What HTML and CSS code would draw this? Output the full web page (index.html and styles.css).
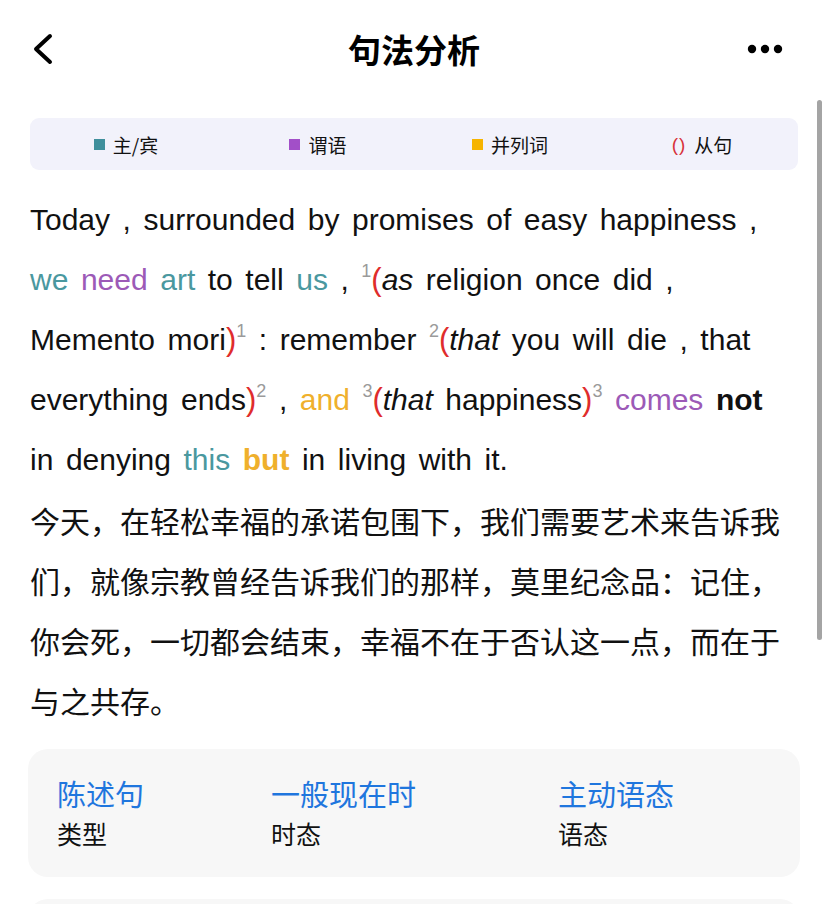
FILE: index.html
```html
<!DOCTYPE html>
<html lang="zh-CN">
<head>
<meta charset="utf-8">
<title>句法分析</title>
<link rel="stylesheet" href="styles.css">
</head>
<body>
<div class="page">
  <header class="nav">
    <svg class="back" width="24" height="32" viewBox="0 0 24 32"><path d="M18 3 L4 16 L18 29" fill="none" stroke="#000" stroke-width="4" stroke-linecap="round" stroke-linejoin="round"/></svg>
    <h1 class="title">句法分析</h1>
    <svg class="more" width="40" height="12" viewBox="0 0 40 12"><circle cx="6" cy="6" r="4.2" fill="#000"/><circle cx="19" cy="6" r="4.2" fill="#000"/><circle cx="32" cy="6" r="4.2" fill="#000"/></svg>
  </header>

  <div class="legend">
    <div class="legend-item"><span class="sq sq-teal"></span>主/宾</div>
    <div class="legend-item"><span class="sq sq-purple"></span>谓语</div>
    <div class="legend-item"><span class="sq sq-orange"></span>并列词</div>
    <div class="legend-item"><span class="paren-mark">()</span>从句</div>
  </div>

  <p class="en">Today , surrounded by promises of easy happiness , <span class="subj">we</span> <span class="pred">need</span> <span class="subj">art</span> to tell <span class="subj">us</span> , <sup class="num">1</sup><span class="par">(</span><i>as</i> religion once did , Memento mori<span class="par">)</span><sup class="num">1</sup> : remember <sup class="num">2</sup><span class="par">(</span><i>that</i> you will die , that everything ends<span class="par">)</span><sup class="num">2</sup> , <span class="conj">and</span> <sup class="num">3</sup><span class="par">(</span><i>that</i> happiness<span class="par">)</span><sup class="num">3</sup> <span class="pred">comes</span> <b>not</b> in denying <span class="subj">this</span> <b class="conj">but</b> in living with it.</p>
  <p class="zh">今天，在轻松幸福的承诺包围下，我们需要艺术来告诉我们，就像宗教曾经告诉我们的那样，莫里纪念品：记住，你会死，一切都会结束，幸福不在于否认这一点，而在于与之共存。</p>

  <div class="card info">
    <div class="info-col"><div class="val">陈述句</div><div class="lab">类型</div></div>
    <div class="info-col"><div class="val">一般现在时</div><div class="lab">时态</div></div>
    <div class="info-col"><div class="val">主动语态</div><div class="lab">语态</div></div>
  </div>
  <div class="card next"></div>

  <div class="scrollbar"></div>
</div>
</body>
</html>
```
FILE: styles.css
```css
html, body {
  margin: 0;
  padding: 0;
  background: #fff;
}
body {
  font-family: "Liberation Sans", "Noto Sans CJK SC", sans-serif;
  color: #000;
  overflow: hidden;
}
.page {
  position: relative;
  width: 828px;
  height: 904px;
  overflow: hidden;
}
.nav {
  height: 100px;
  display: flex;
  align-items: center;
  justify-content: space-between;
  padding: 0 30px 0 32px;
  box-sizing: border-box;
  position: relative;
}
.back {
  display: block;
  margin-top: -2px;
}
.more {
  display: block;
  margin-top: -2px;
  margin-right: 12px;
}
.title {
  position: absolute;
  left: 0;
  right: 0;
  top: 0;
  margin: 0;
  line-height: 98px;
  text-align: center;
  font-family: "Noto Sans CJK SC", sans-serif;
  font-weight: 700;
  font-size: 33px;
  pointer-events: none;
}
.legend {
  margin: 18px 30px 0 30px;
  height: 52px;
  background: #f2f2fb;
  border-radius: 9px;
  display: grid;
  grid-template-columns: repeat(4, 1fr);
  align-items: center;
  font-family: "Noto Sans CJK SC", sans-serif;
  font-size: 19px;
  color: #111;
}
.legend-item {
  display: flex;
  align-items: center;
  justify-content: center;
  line-height: 1;
}
.sq {
  width: 11px;
  height: 11px;
  margin-right: 8px;
  display: inline-block;
}
.sq-teal { background: #3f8f9c; }
.sq-purple { background: #a24fc8; }
.sq-orange { background: #f6b400; }
.paren-mark {
  color: #d8333a;
  margin-right: 8px;
  letter-spacing: 1px;
  font-family: "Liberation Sans", sans-serif;
}
.en {
  margin: 20px 34px 0 30px;
  font-size: 30px;
  word-spacing: 4.2px;
  line-height: 60px;
  color: #111;
}
.zh {
  margin: 0 30px 0 30px;
  font-family: "Noto Sans CJK SC", sans-serif;
  font-size: 30px;
  line-height: 60px;
  color: #111;
}
.subj { color: #4a989f; }
.pred { color: #9c5ab7; }
.conj { color: #efb02c; }
.par { color: #df2c2c; font-size: 31px; }
b { font-weight: 700; }
i { font-style: italic; }
.num {
  color: #9a9a9a;
  font-size: 18px;
  vertical-align: 0;
  position: relative;
  top: -13px;
  line-height: 0;
  word-spacing: 0;
}
.card {
  margin: 0 28px;
  background: #f7f7f7;
  border-radius: 20px;
}
.info {
  margin-top: 19px;
  height: 128px;
  box-sizing: border-box;
  padding: 24px 0 0 29px;
  display: grid;
  grid-template-columns: 214px 287px 1fr;
  font-family: "Noto Sans CJK SC", sans-serif;
}
.val {
  color: #1f76de;
  font-size: 29px;
  line-height: 40px;
}
.lab {
  color: #111;
  font-size: 25px;
  line-height: 40px;
}
.next {
  margin-top: 22px;
  height: 100px;
}
.scrollbar {
  position: absolute;
  left: 817px;
  top: 100px;
  width: 5px;
  height: 540px;
  background: #a4a4a4;
  border-radius: 3px;
}
```
